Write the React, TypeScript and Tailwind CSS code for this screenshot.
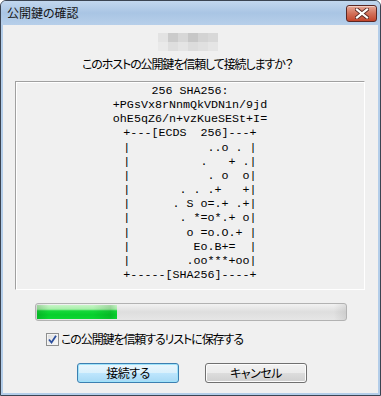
import React from "react";

const mono = [
  "256 SHA256:",
  "+PGsVx8rNnmQkVDN1n/9jd",
  "ohE5qZ6/n+vzKueSESt+I=",
  "+---[ECDS  256]---+",
  "|           ..o . |",
  "|          .   + .|",
  "|           . o  o|",
  "|       . . .+   +|",
  "|      . S o=.+ .+|",
  "|       . *=o*.+ o|",
  "|        o =o.O.+ |",
  "|         Eo.B+=  |",
  "|        .oo***+oo|",
  "+-----[SHA256]----+",
];

const hostRows = [
  ["#e3e3e3", "#cbcbcb", "#d7d7d7", "#c7c7c7", "#d3d3d3", "#d8d8d8"],
  ["#e9e9e9", "#dedede", "#e4e4e4", "#dcdcdc", "#e0e0e0", "#e5e5e5"],
];

export default function App() {
  const jp = {
    fontFamily: '"Noto Sans CJK JP", "Noto Sans", sans-serif',
    fontFeatureSettings: '"palt"',
  } as React.CSSProperties;
  return (
    <div className="w-[381px] h-[396px] flex flex-col rounded-t-[6px] border border-[#3b4452] bg-[#b3cde9] overflow-hidden">
      {/* title bar */}
      <div className="h-[24px] flex items-start pl-[6px] pr-[3px] bg-gradient-to-b from-[#c2d7ee] via-[#a9c5e4] to-[#b7cfea]">
        <span className="mt-[5px] text-[12px] leading-[14px] text-[#141414]" style={jp}>
          公開鍵の確認
        </span>
        <div className="ml-auto mt-[4px] w-[31px] h-[17px] rounded-[3px] border border-[#5a2724] bg-gradient-to-b from-[#e6a797] via-[#d2705a] to-[#c3442b] flex items-center justify-center shadow-[inset_0_1px_0_rgba(255,255,255,0.45)]">
          <svg width="14" height="11" viewBox="0 0 14 11">
            <path
              d="M2 1.5 L12 9.5 M12 1.5 L2 9.5"
              stroke="#5a2a26"
              strokeWidth="4"
              strokeLinecap="square"
              fill="none"
            />
            <path
              d="M2 1.5 L12 9.5 M12 1.5 L2 9.5"
              stroke="#ffffff"
              strokeWidth="2.2"
              strokeLinecap="square"
              fill="none"
            />
          </svg>
        </div>
      </div>

      {/* client area */}
      <div className="flex-1 mx-[2px] mb-[2px] bg-[#f0f0f0] flex flex-col">
        {/* blurred host */}
        <div className="mt-[8px] ml-[155px] flex flex-col">
          {hostRows.map((row, i) => (
            <div key={i} className="flex">
              {row.map((c, j) => (
                <div key={j} className="w-[10px] h-[9px]" style={{ background: c }} />
              ))}
            </div>
          ))}
        </div>

        {/* question */}
        <div
          className="mt-[5px] ml-[79px] text-[12px] leading-[16px] tracking-[-1.1px] text-black"
          style={jp}
        >
          このホストの公開鍵を信頼して接続しますか？
        </div>

        {/* fingerprint box */}
        <div className="mt-[9px] ml-[12px] w-[350px] h-[209px] border-t border-l border-[#a0a0a0] border-b-white border-r-white border-b border-r shadow-[inset_1px_1px_0_#ffffff] pt-[2px]">
          <div
            className="text-[11.7px] leading-[14.15px] text-black"
            style={{ fontFamily: '"Liberation Mono", "DejaVu Sans Mono", monospace' }}
          >
            {mono.map((l, i) => (
              <div key={i} className="whitespace-pre text-center">
                {l}
              </div>
            ))}
          </div>
        </div>

        {/* progress */}
        <div className="mt-[13px] ml-[32px] w-[312px] h-[18px] rounded-[3px] border border-[#b2b2b2] bg-gradient-to-b from-[#f2f2f2] via-[#dedede] to-[#e6e6e6] p-[1px] flex overflow-hidden relative">
          <div className="absolute inset-0 bg-[linear-gradient(to_right,rgba(0,0,0,0.08),transparent_4%,transparent_96%,rgba(0,0,0,0.08))]" />
          <div className="relative w-[80px] h-full bg-[linear-gradient(to_bottom,#c8f5c8_0%,#a6eea8_30%,#14d83a_42%,#06cf2c_70%,#0bd633_100%)]">
            <div className="absolute inset-0 bg-[linear-gradient(to_right,rgba(0,60,0,0.18),transparent_15%,transparent_70%,rgba(0,60,0,0.15)_92%,transparent)]" />
          </div>
        </div>

        {/* checkbox */}
        <div className="mt-[11px] ml-[43px] flex items-center h-[14px]">
          <div className="w-[13px] h-[13px] border border-[#8e8f8f] bg-gradient-to-br from-[#dcdcdc] to-[#fbfbfb] shadow-[inset_0_0_0_1px_#f4f4f4] flex items-center justify-center">
            <svg width="9" height="9" viewBox="0 0 9 9">
              <path d="M1 4.5 L3.5 7.5 L8 0.8" stroke="#2c4f9e" strokeWidth="1.8" fill="none" />
            </svg>
          </div>
          <span
            className="ml-[2px] text-[12px] leading-[14px] tracking-[-1.1px] text-black"
            style={jp}
          >
            この公開鍵を信頼するリストに保存する
          </span>
        </div>

        {/* buttons */}
        <div className="mt-[17px] ml-[74px] flex gap-[26px]">
          <button
            className="w-[102px] h-[20px] rounded-[3px] border border-[#3c7fb1] bg-[linear-gradient(to_bottom,#eaf6fd_0%,#d9f0fc_50%,#bee6fd_50%,#a7d9f5_100%)] shadow-[inset_0_0_0_1px_#9fe3fa] text-[12px] leading-[18px] tracking-[-0.5px] text-black flex items-center justify-center"
            style={jp}
          >
            接続する
          </button>
          <button
            className="w-[102px] h-[20px] rounded-[3px] border border-[#707070] bg-[linear-gradient(to_bottom,#f2f2f2_0%,#ebebeb_50%,#dddddd_50%,#cfcfcf_100%)] shadow-[inset_0_0_0_1px_#fcfcfc] text-[12px] leading-[18px] tracking-[-0.5px] text-black flex items-center justify-center"
            style={jp}
          >
            キャンセル
          </button>
        </div>
      </div>
    </div>
  );
}
